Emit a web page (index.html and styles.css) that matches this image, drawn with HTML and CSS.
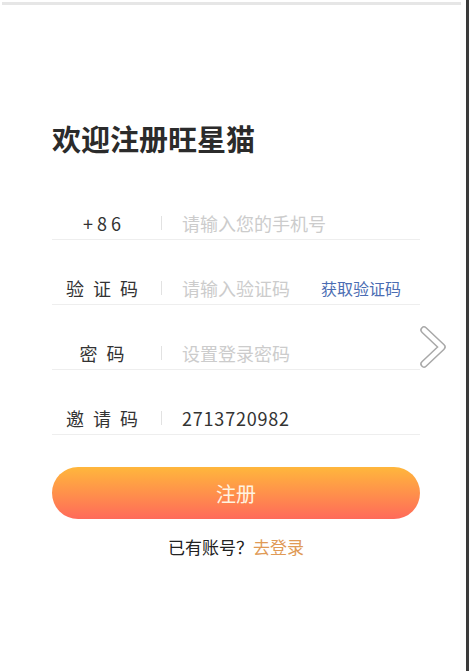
FILE: index.html
```html
<!DOCTYPE html>
<html lang="zh-CN">
<head>
    <meta charset="UTF-8">
    <meta name="viewport" content="width=device-width, initial-scale=1.0">
    <title>注册旺星猫</title>
    <link rel="stylesheet" href="styles.css">
</head>
<body>
    <div class="page">
        <div class="top-bar"></div>
        <div class="register-container">
            <h2 class="title">欢迎注册旺星猫</h2>

            <div class="form-row">
                <label class="row-label phone-code">+86</label>
                <span class="divider"></span>
                <input class="row-input" type="text" placeholder="请输入您的手机号">
            </div>
            <div class="form-row">
                <label class="row-label">验证码</label>
                <span class="divider"></span>
                <input class="row-input" type="text" placeholder="请输入验证码">
                <a class="get-code" href="#">获取验证码</a>
            </div>
            <div class="form-row">
                <label class="row-label">密码</label>
                <span class="divider"></span>
                <input class="row-input" type="password" placeholder="设置登录密码">
            </div>
            <div class="form-row">
                <label class="row-label">邀请码</label>
                <span class="divider"></span>
                <input class="row-input" type="text" value="2713720982">
            </div>

            <button class="register-button">注册</button>
            <p class="login-link">已有账号<span class="q-mark">？</span><a href="#">去登录</a></p>
        </div>

        <!-- next page arrow -->
        <div class="next-arrow">
            <svg width="30" height="44" viewBox="0 0 30 44">
                <path d="M6 5 L24 22 L6 39" fill="none" stroke="#a8a8a8" stroke-width="7.5" stroke-linecap="round" stroke-linejoin="round"/>
                <path d="M6 5 L24 22 L6 39" fill="none" stroke="#ffffff" stroke-width="4.5" stroke-linecap="round" stroke-linejoin="round"/>
            </svg>
        </div>
    </div>
    <div class="side-strip"></div>
</body>
</html>
```

FILE: styles.css
```css
body {
    font-family: "Noto Sans CJK SC", "Noto Sans", sans-serif;
    margin: 0;
    display: flex;
    width: 469px;
    height: 671px;
    overflow: hidden;
    background-color: #fff;
}

.page {
    position: relative;
    flex: 1;
    min-width: 0;
    background-color: #fff;
}

.side-strip {
    width: 3px;
    background-color: #3a3a3a;
}

.top-bar {
    height: 3px;
    margin: 2px 5px 0 2px;
    background-color: #e6e6e6;
}

.register-container {
    padding: 113px 46px 0 52px;
}

.title {
    margin: 0 0 51px 0;
    font-size: 29px;
    line-height: 40px;
    font-weight: bold;
    color: #2b2b2b;
}

.form-row {
    display: flex;
    align-items: center;
    height: 27px;
    padding-bottom: 3px;
    border-bottom: 1px solid #eeeeee;
    margin-bottom: 34px;
}

.row-label {
    box-sizing: border-box;
    width: 100px;
    padding-left: 9px;
    text-align: center;
    font-size: 18px;
    letter-spacing: 9px;
    color: #333;
}

.row-label.phone-code {
    padding-left: 4px;
    letter-spacing: 4px;
}

.divider {
    width: 1px;
    height: 14px;
    margin-left: 9px;
    background-color: #e2e2e2;
}

.row-input {
    flex: 1;
    min-width: 0;
    width: 0;
    margin-left: 20px;
    padding: 0;
    border: none;
    outline: none;
    font-family: inherit;
    font-size: 18px;
    letter-spacing: 0.8px;
    color: #333;
    background: transparent;
}

.row-input::placeholder {
    color: #cccccc;
    letter-spacing: 0;
}

.get-code {
    font-size: 16px;
    color: #4b6db3;
    text-decoration: none;
    margin-right: 19px;
}

.register-button {
    display: block;
    width: 100%;
    height: 52px;
    margin-top: -2px;
    border: none;
    border-radius: 26px;
    background: linear-gradient(to bottom, #ffb73c, #ff6a5a);
    color: #fff3e0;
    font-family: inherit;
    font-size: 20px;
    cursor: pointer;
}

.login-link {
    margin: 15px 0 0 0;
    text-align: center;
    font-size: 17px;
    color: #222;
}

.login-link .q-mark {
    display: inline-block;
    width: 17px;
    text-align: center;
}

.login-link a {
    color: #e09a56;
    text-decoration: none;
}

.next-arrow {
    position: absolute;
    left: 418px;
    top: 325px;
}
```
